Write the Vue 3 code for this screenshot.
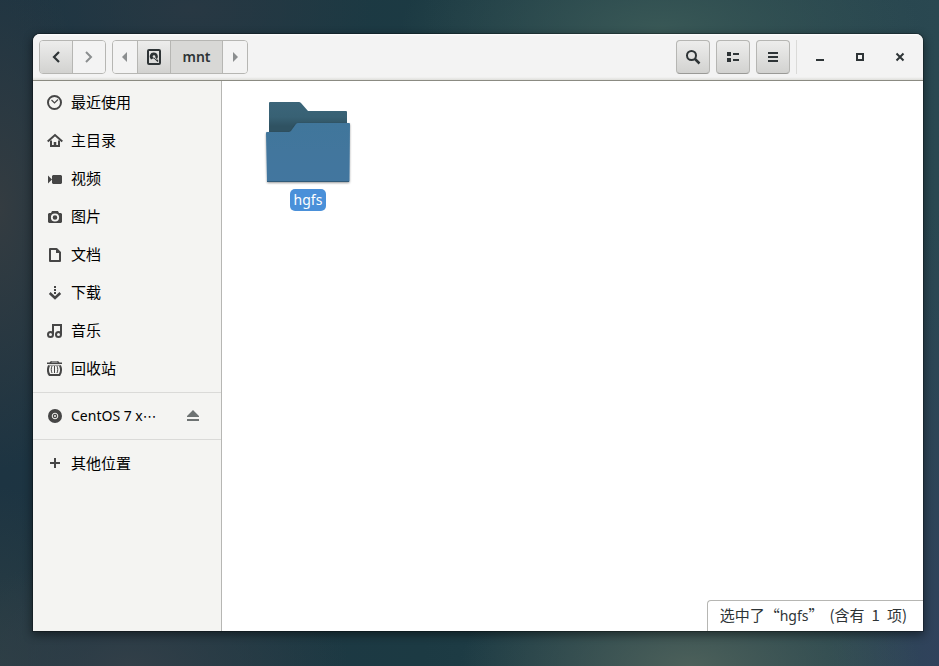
<script setup>
const places = [
  { id: 'recent', label: '最近使用' },
  { id: 'home', label: '主目录' },
  { id: 'video', label: '视频' },
  { id: 'photo', label: '图片' },
  { id: 'document', label: '文档' },
  { id: 'download', label: '下载' },
  { id: 'music', label: '音乐' },
  { id: 'trash', label: '回收站' },
]
</script>

<template>
  <main class="desktop">
    <section class="window">
      <header class="titlebar">
        <div class="linked">
          <button class="btn" aria-label="后退">
            <svg class="icon" viewBox="0 0 16 16"><path d="M11 3 6 8l5 5" fill="none" stroke="#2e3436" stroke-width="2.200" /></svg>
          </button>
          <button class="btn flat" aria-label="前进" disabled>
            <svg class="icon" viewBox="0 0 16 16"><path d="m5 3 5 5-5 5" fill="none" stroke="#8b8e8f" stroke-width="2" /></svg>
          </button>
        </div>
        <nav class="linked path" aria-label="路径">
          <button class="btn flat narrow" aria-label="上一级">
            <svg class="icon" viewBox="0 0 16 16"><path d="M10 3v10L5 8z" fill="#8b8e8f" /></svg>
          </button>
          <button class="btn disk" aria-label="计算机">
            <svg class="icon" viewBox="0 0 16 16">
              <rect x="2" y="1" width="12" height="14" rx="1" fill="none" stroke="#2e3436" stroke-width="2" />
              <path d="M8 3.500A4 4 0 0 0 5 10.500l2-1h1l3.500 3.500 1-1-1.500-2A4 4 0 0 0 8 3.500z" fill="#2e3436" />
              <circle cx="8" cy="7.500" r="1.300" fill="#e4e4e2" />
              <path d="m8.500 8 2 2.500" stroke="#e4e4e2" />
            </svg>
          </button>
          <button class="btn current">mnt</button>
          <button class="btn flat narrow" aria-label="下一级">
            <svg class="icon" viewBox="0 0 16 16"><path d="M6 3v10l5-5z" fill="#8b8e8f" /></svg>
          </button>
        </nav>
        <div class="tools">
          <button class="btn tool" aria-label="搜索">
            <svg class="icon" viewBox="0 0 16 16">
              <circle cx="6.500" cy="6.500" r="4.500" fill="none" stroke="#2e3436" stroke-width="2" />
              <path d="m10 10 4.500 4.500" stroke="#2e3436" stroke-width="2.500" />
            </svg>
          </button>
          <button class="btn tool" aria-label="列表视图">
            <svg class="icon" viewBox="0 0 16 16"><path d="M2 3h4v4H2zM2 9h4v4H2zM8 4h6v2H8zM8 10h6v2H8z" fill="#2e3436" /></svg>
          </button>
          <button class="btn tool" aria-label="菜单">
            <svg class="icon" viewBox="0 0 16 16"><path d="M3 3h10v2H3zM3 7h10v2H3zM3 11h10v2H3z" fill="#2e3436" /></svg>
          </button>
        </div>
        <div class="controls">
          <button class="control" aria-label="最小化">
            <svg class="icon" viewBox="0 0 16 16"><path d="M4 10h8v2H4z" fill="#2e3436" /></svg>
          </button>
          <button class="control" aria-label="最大化">
            <svg class="icon" viewBox="0 0 16 16"><path d="M5 5h6v6H5z" fill="none" stroke="#2e3436" stroke-width="2" /></svg>
          </button>
          <button class="control" aria-label="关闭">
            <svg class="icon" viewBox="0 0 16 16"><path d="m4.500 4.500 7 7m0-7-7 7" stroke="#2e3436" stroke-width="2" /></svg>
          </button>
        </div>
      </header>

      <div class="body">
        <aside class="sidebar">
          <ul class="group">
            <li v-for="place in places" :key="place.id">
              <a class="row" href="#">
                <svg class="icon" viewBox="0 0 16 16">
                  <g v-if="place.id === 'recent'" fill="none" stroke="#464646">
                    <circle cx="7.500" cy="8.500" r="6.500" stroke-width="2" />
                    <path d="m4.500 6 3 3L11 5.500" stroke-width="1.200" />
                  </g>
                  <g v-else-if="place.id === 'home'" fill="none" stroke="#464646" stroke-width="2">
                    <path d="m.7 9.500 7.300-6.500 7.300 6.500" />
                    <path d="M4 8.500V14h8V8.500" />
                    <path d="M8 10v4" stroke-width="2.500" />
                  </g>
                  <path v-else-if="place.id === 'video'" d="M6 5h8l1 1v7l-1 1H6l-1-1V6zM1 5.500l4 4-4 4z" fill="#464646" />
                  <g v-else-if="place.id === 'photo'">
                    <path d="M5 3h6l1 2h2l1 1v8l-1 1H2l-1-1V6l1-1h2z" fill="#464646" />
                    <circle cx="8" cy="9.500" r="3.200" fill="none" stroke="#f4f4f2" stroke-width="1.800" />
                  </g>
                  <g v-else-if="place.id === 'document'">
                    <path d="M3 3h6.500L13 6.500V15H3z" fill="none" stroke="#464646" stroke-width="2" stroke-linejoin="round" />
                    <path d="M9 3v4h4z" fill="#464646" />
                  </g>
                  <g v-else-if="place.id === 'download'" fill="none" stroke="#464646" stroke-width="2">
                    <path d="M8 2v9" stroke-dasharray="2 1" />
                    <path d="m2.700 9 5.300 5 5.300-5" stroke-width="2.500" />
                  </g>
                  <g v-else-if="place.id === 'music'" fill="none" stroke="#464646" stroke-width="2">
                    <circle cx="3.500" cy="12.500" r="2.500" />
                    <circle cx="11.500" cy="12.500" r="2.500" />
                    <path d="M6 12.500V3h8v9.500" />
                  </g>
                  <g v-else fill="none" stroke="#464646">
                    <path d="M0 4V2.500h2.500L4 1h7l1.500 1.500H15V4z" fill="#464646" stroke="none" />
                    <path d="M4.500 2h6" stroke="#f4f4f2" stroke-width=".8" />
                    <path d="M2 5.500C.7 8.500.8 12.500 2.500 15h10c1.700-2.500 1.800-6.500.5-9.500" stroke-width="2" />
                    <path d="M7.500 6v7M5 6C4 8.500 4 10.500 5 13M10 6c1 2.500 1 4.500 0 7" />
                    <path d="M2 5.300h11" stroke-width=".6" />
                  </g>
                </svg>
                <span>{{ place.label }}</span>
              </a>
            </li>
          </ul>
          <div class="group row">
            <svg class="icon" viewBox="0 0 16 16">
              <circle cx="8" cy="8" r="7" fill="#464646" />
              <circle cx="8" cy="8" r="2.800" fill="none" stroke="#f4f4f2" />
              <circle cx="8" cy="8" r="1" fill="#f4f4f2" />
            </svg>
            <a class="volume latin" href="#">CentOS 7 x<span class="dots">⋯</span></a>
            <button class="eject" aria-label="弹出">
              <svg class="icon" viewBox="0 0 16 16"><path d="m8 2 6 6v1H2V8zM2 11h12v2H2z" fill="#6d7272" /></svg>
            </button>
          </div>
          <a class="group row" href="#">
            <svg class="icon" viewBox="0 0 16 16"><path d="M3 8h10M8 3v10" stroke="#464646" stroke-width="2" /></svg>
            <span>其他位置</span>
          </a>
        </aside>

        <div class="content">
          <a class="item" href="#">
            <svg class="folder" viewBox="0 -1 96 96">
              <defs>
                <linearGradient id="folder-back" x2="0" y2="1">
                  <stop offset="0" stop-color="#3b6579" />
                  <stop offset=".25" stop-color="#386174" />
                  <stop offset=".4" stop-color="#2f5262" />
                </linearGradient>
                <linearGradient id="folder-front" x2="0" y2="1">
                  <stop offset="0" stop-color="#41769b" />
                  <stop offset="1" stop-color="#43769f" />
                </linearGradient>
                <filter id="folder-shadow" x="-10%" y="-10%" width="120%" height="125%">
                  <feDropShadow dx="0" dy="1" stdDeviation="1" flood-opacity=".4" />
                </filter>
              </defs>
              <path d="M9 9q0-1 1-1h29q1 0 2 1l7 8h38q1 0 1 1v50H9z" fill="url(#folder-back)" />
              <path d="M6 39q0-1 1-1h22q1 0 2-1l5-7q1-1 2-1h51q1 0 1 1l-.5 57q0 1-1 1H8q-1 0-1-1z" fill="url(#folder-front)" filter="url(#folder-shadow)" />
              <path d="M7 87.500h82" stroke="#315b79" />
            </svg>
            <span class="name latin">hgfs</span>
          </a>
          <div class="status" role="status">
            <span>选中了“<span class="latin">hgfs</span>”</span>
            <span class="count"><span>(含有</span> <span>1</span> <span>项)</span></span>
          </div>
        </div>
      </div>
    </section>
  </main>
</template>

<style>
body {
  margin: 0;
}
</style>

<style scoped>
* {
  box-sizing: border-box;
}
.desktop {
  display: flex;
  min-height: 100vh;
  padding: 34px 16px 35px 33px;
  font: 15px/20px "Noto Sans CJK SC", sans-serif;
  color: #000;
  background:
    radial-gradient(ellipse 260px 110px at 660px 30px, #395856, transparent),
    radial-gradient(ellipse 230px 110px at 690px 100%, #4c605a, transparent),
    radial-gradient(ellipse 220px 110px at 130px 100%, #323f48, transparent),
    radial-gradient(ellipse 180px 90px at 190px 10px, #283843, transparent),
    radial-gradient(ellipse 100px 260px at 0 210px, #343c41, transparent),
    radial-gradient(ellipse 90px 180px at 0 100%, #2b3e44, transparent),
    radial-gradient(ellipse 110px 460px at 100% 100%, #30425c, transparent),
    linear-gradient(90deg, #1d3442, #1c3a43 45%, #2a4851);
}
button {
  margin: 0;
  padding: 0;
  border: 0;
  background: none;
  font: inherit;
  color: inherit;
}
a {
  color: inherit;
  text-decoration: none;
}
.icon {
  display: block;
  flex: none;
  width: 16px;
  height: 16px;
}
.latin {
  font-family: "Noto Sans", sans-serif;
  font-size: 14px;
}
.window {
  display: flex;
  flex: 1;
  flex-direction: column;
  min-width: 0;
  overflow: hidden;
  border-radius: 7px 7px 0 0;
  background: #fff;
  box-shadow: 0 0 0 1px rgba(0, 0, 0, 0.25), 0 3px 10px 1px rgba(0, 0, 0, 0.45);
}
.titlebar {
  display: flex;
  align-items: center;
  height: 47px;
  padding: 0 6px 1px 6px;
  border-bottom: 1px solid #8b8b82;
  background: linear-gradient(#fff, #f3f3f3 2px, #f3f3f3 43px, #dededa);
}
.linked {
  display: flex;
  border: 1px solid #b6b6b3;
  border-radius: 4px;
  overflow: hidden;
}
.path {
  margin-left: 6px;
}
.btn {
  display: flex;
  align-items: center;
  justify-content: center;
  width: 32px;
  height: 32px;
  background: linear-gradient(#ededec, #d2d2d0);
}
.linked .btn + .btn {
  width: 33px;
  border-left: 1px solid #b6b6b3;
}
.linked .btn.narrow {
  width: 24px;
}
.linked .btn + .btn.narrow {
  width: 25px;
}
.linked .btn.flat {
  background: #f3f3f3;
}
.linked .btn.current {
  width: 52px;
  background: #d8d8d6;
  color: #2e3436;
  font-family: "Noto Sans", sans-serif;
  font-size: 14px;
  font-weight: 600;
}
.tools {
  display: flex;
  gap: 6px;
  margin-left: auto;
  padding-right: 6px;
  border-right: 1px solid #dadad8;
}
.btn.tool {
  width: 34px;
  height: 34px;
  border: 1px solid #b6b6b3;
  border-bottom-color: #9a9a97;
  border-radius: 4px;
}
.controls {
  display: flex;
  gap: 6px;
  margin-left: 6px;
}
.control {
  display: flex;
  align-items: center;
  justify-content: center;
  width: 34px;
  height: 34px;
}
.body {
  display: flex;
  flex: 1;
}
.sidebar {
  flex: none;
  width: 189px;
  padding-top: 2px;
  border-right: 1px solid #b6b6b3;
  background: #f4f4f2;
}
ul {
  margin: 0;
  padding: 0;
  list-style: none;
}
.row {
  display: flex;
  align-items: center;
  gap: 8px;
  height: 38px;
  padding: 0 20px 0 14px;
}
.group + .group {
  height: 47px;
  margin-top: 5px;
  border-top: 1px solid #dadad8;
}
.group.row + .group.row {
  margin-top: 0;
}
.volume {
  flex: 1;
}
.dots {
  font-family: "DejaVu Sans", sans-serif;
  line-height: 1;
}
.content {
  position: relative;
  flex: 1;
  padding: 12px 38px;
}
.item {
  display: inline-flex;
  flex-direction: column;
  align-items: center;
}
.folder {
  display: block;
  width: 96px;
  height: 96px;
}
.name {
  padding: 1px 4px;
  border-radius: 5px;
  background: #4a90d9;
  color: #fff;
}
.status {
  position: absolute;
  right: 0;
  bottom: 0;
  display: flex;
  gap: 6px;
  padding: 4px 16px 5px 12px;
  border: solid #b6b6b3;
  border-width: 1px 0 0 1px;
  border-radius: 4px 0 0 0;
  background: #fff;
  color: #2e3436;
}
.count {
  display: flex;
  gap: 7px;
}
</style>
